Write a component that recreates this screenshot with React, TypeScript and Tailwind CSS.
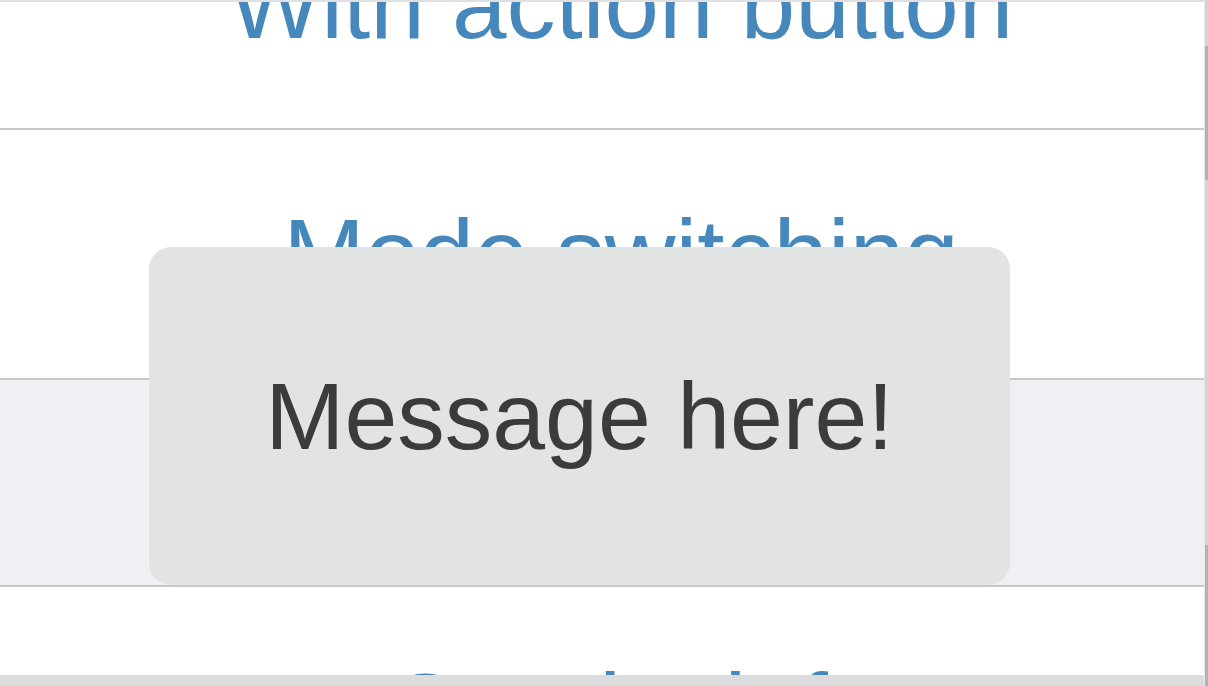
import React from "react";

const rows = ["With action button", "Mode switching"];

const Row: React.FC<{ label: string }> = ({ label }) => (
    <div className="h-[250px] flex items-center justify-center pl-[38px] border-b-2 border-[#c8c7cc] bg-white">
        <span className="text-[98px] leading-none text-[#4688bb] whitespace-nowrap">{label}</span>
    </div>
);

const App: React.FC = () => {
    return (
        <div className="w-[1208px] h-[686px] flex overflow-hidden bg-white relative" style={{ fontFamily: '"Liberation Sans", Arial, sans-serif' }}>
            <div className="flex-1 flex flex-col min-w-0">
                <div className="h-[2px] bg-[#e0e0e0] relative z-10" />
                <div className="flex-1 overflow-hidden">
                    <div className="-mt-[122px] flex flex-col">
                        {rows.map((r, i) => (
                            <Row key={i} label={r} />
                        ))}
                        <div className="h-[207px] bg-[#efeff4] border-b-2 border-[#c8c7cc]" />
                        <div className="h-[248px] flex items-start justify-center pl-[38px] pt-[72px] bg-white">
                            <span className="text-[98px] leading-none text-[#4688bb] whitespace-nowrap">Gravity left</span>
                        </div>
                    </div>
                </div>
                <div className="h-[11px] bg-[#dcdcdc]" />
            </div>
            <div className="w-[4px] flex flex-col border-l border-[#e8e8e8]">
                <div className="h-[46px] bg-[#d4d4d4]" />
                <div className="h-[134px] bg-[#b2b2b2]" />
                <div className="h-[365px] bg-[#d4d4d4]" />
                <div className="flex-1 bg-[#b2b2b2]" />
            </div>

            {/* toast */}
            <div className="absolute left-[149px] top-[247px] w-[861px] h-[338px] rounded-[22px] bg-[#e2e3e3] flex items-center justify-center">
                <span className="text-[95px] leading-none text-[#3b3b3b] whitespace-nowrap">Message here!</span>
            </div>
        </div>
    );
};

export default App;
